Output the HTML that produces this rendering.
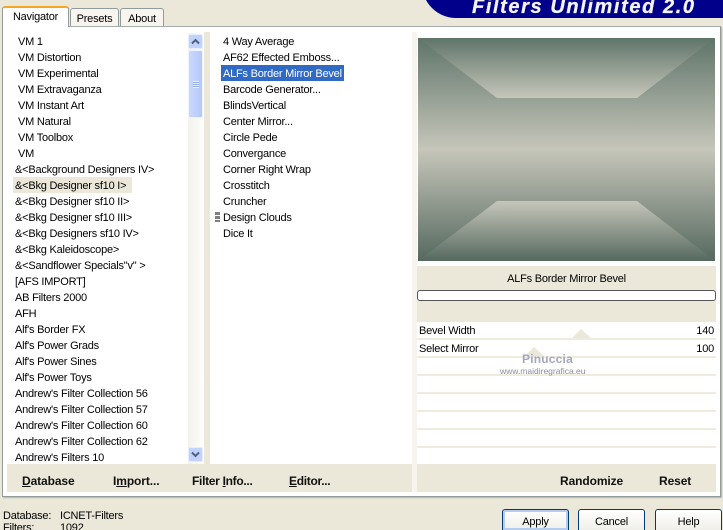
<!DOCTYPE html>
<html><head><meta charset="utf-8"><style>
html,body{margin:0;padding:0;width:723px;height:530px;overflow:hidden}
#root{left:0;top:0;width:723px;height:530px;overflow:hidden;background:#ebe8da;font-family:"Liberation Sans",sans-serif;font-size:11px;letter-spacing:-.22px;color:#000}
div{position:absolute;box-sizing:border-box}
.row{position:absolute;height:16px;line-height:18px;white-space:pre}
.tab{background:#f7f5ee;border:1px solid #919b9c;border-bottom:none;border-radius:3px 3px 0 0;text-align:center;line-height:20px}
.b{font-weight:bold;font-size:12px;letter-spacing:-.1px;position:absolute;top:473px;line-height:16px;white-space:pre;color:#111}
.line{left:417px;width:299px;height:2px;background:#efecdf}
.btn{top:509px;width:67px;height:21px;border:1px solid #003c74;border-bottom:none;border-radius:3px 3px 0 0;background:linear-gradient(#fff,#f0efe9);text-align:center;line-height:25px}
</style></head><body><div id="root">
<div style="left:422px;top:-30px;width:320px;height:48px;background:#00008b;border-radius:0 0 0 34px"></div>
<div style="left:472px;top:-4px;font:italic bold 20px/22px 'Liberation Sans',sans-serif;color:#f4f4f4;letter-spacing:1.6px;-webkit-text-stroke:.3px #f4f4f4;white-space:pre">Filters Unlimited 2.0</div>

<div style="left:2px;top:26px;width:719px;height:471px;background:#fff;border:1px solid #919b9c;border-top-color:#a5adac;box-shadow:1px 1px 1px #b5b5ad"></div>
<div class="tab" style="left:70px;top:8px;width:49px;height:18px;line-height:21px">Presets</div>
<div class="tab" style="left:120px;top:8px;width:44px;height:18px;line-height:21px">About</div>
<div class="tab" style="left:2px;top:6px;width:67px;height:21px;background:#fff;border-top:2px solid #f5a623;line-height:18px;z-index:2">Navigator</div>

<div style="left:3px;top:27px;width:4px;height:469px;background:#fff"></div>
<div style="left:204px;top:32px;width:6px;height:432px;background:#ebe8da"></div>
<div style="left:412px;top:32px;width:5px;height:460px;background:#f6f4ec"></div>

<!-- scrollbar -->
<div style="left:188px;top:33px;width:16px;height:431px;background:linear-gradient(90deg,#f3f2ec,#fefefb)"></div>
<div style="left:188px;top:34px;width:15px;height:15px;background:#c2d3fb;border:1px solid #e6edfd;border-radius:2px"></div>
<svg style="position:absolute;left:188px;top:34px" width="15" height="15"><path d="M4 9.5L7.5 6L11 9.5" fill="none" stroke="#4d6185" stroke-width="2"/></svg>
<div style="left:188px;top:50px;width:15px;height:68px;background:linear-gradient(90deg,#c9d8fc,#b5c9f8);border:1px solid #eef3fe;border-radius:2px"></div>
<div style="left:193px;top:81px;width:6px;height:7px;background:repeating-linear-gradient(#eef3fe 0 1px,#8faae8 1px 2px)"></div>
<div style="left:188px;top:447px;width:15px;height:15px;background:#c2d3fb;border:1px solid #e6edfd;border-radius:2px"></div>
<svg style="position:absolute;left:188px;top:447px" width="15" height="15"><path d="M4 5.5L7.5 9L11 5.5" fill="none" stroke="#4d6185" stroke-width="2"/></svg>

<!-- left list -->
<div style="left:13px;top:177px;width:119px;height:16px;background:#ebe8da"></div>
<div class="row" style="left:18px;top:33px">VM 1</div>
<div class="row" style="left:18px;top:49px">VM Distortion</div>
<div class="row" style="left:18px;top:65px">VM Experimental</div>
<div class="row" style="left:18px;top:81px">VM Extravaganza</div>
<div class="row" style="left:18px;top:97px">VM Instant Art</div>
<div class="row" style="left:18px;top:113px">VM Natural</div>
<div class="row" style="left:18px;top:129px">VM Toolbox</div>
<div class="row" style="left:18px;top:145px">VM</div>
<div class="row" style="left:15px;top:161px">&amp;&lt;Background Designers IV&gt;</div>
<div class="row" style="left:15px;top:177px">&amp;&lt;Bkg Designer sf10 I&gt;</div>
<div class="row" style="left:15px;top:193px">&amp;&lt;Bkg Designer sf10 II&gt;</div>
<div class="row" style="left:15px;top:209px">&amp;&lt;Bkg Designer sf10 III&gt;</div>
<div class="row" style="left:15px;top:225px">&amp;&lt;Bkg Designers sf10 IV&gt;</div>
<div class="row" style="left:15px;top:241px">&amp;&lt;Bkg Kaleidoscope&gt;</div>
<div class="row" style="left:15px;top:257px">&amp;&lt;Sandflower Specials"v" &gt;</div>
<div class="row" style="left:15px;top:273px">[AFS IMPORT]</div>
<div class="row" style="left:15px;top:289px">AB Filters 2000</div>
<div class="row" style="left:15px;top:305px">AFH</div>
<div class="row" style="left:15px;top:321px">Alf's Border FX</div>
<div class="row" style="left:15px;top:337px">Alf's Power Grads</div>
<div class="row" style="left:15px;top:353px">Alf's Power Sines</div>
<div class="row" style="left:15px;top:369px">Alf's Power Toys</div>
<div class="row" style="left:15px;top:385px">Andrew's Filter Collection 56</div>
<div class="row" style="left:15px;top:401px">Andrew's Filter Collection 57</div>
<div class="row" style="left:15px;top:417px">Andrew's Filter Collection 60</div>
<div class="row" style="left:15px;top:433px">Andrew's Filter Collection 62</div>
<div class="row" style="left:15px;top:449px">Andrew's Filters 10</div>

<!-- middle list -->
<div style="left:221px;top:65px;width:123px;height:16px;background:#316ac5"></div>
<div class="row" style="left:223px;top:33px">4 Way Average</div>
<div class="row" style="left:223px;top:49px">AF62 Effected Emboss...</div>
<div class="row" style="left:223px;top:65px;color:#fff">ALFs Border Mirror Bevel</div>
<div class="row" style="left:223px;top:81px">Barcode Generator...</div>
<div class="row" style="left:223px;top:97px">BlindsVertical</div>
<div class="row" style="left:223px;top:113px">Center Mirror...</div>
<div class="row" style="left:223px;top:129px">Circle Pede</div>
<div class="row" style="left:223px;top:145px">Convergance</div>
<div class="row" style="left:223px;top:161px">Corner Right Wrap</div>
<div class="row" style="left:223px;top:177px">Crosstitch</div>
<div class="row" style="left:223px;top:193px">Cruncher</div>
<div class="row" style="left:223px;top:209px">Design Clouds</div>
<div class="row" style="left:223px;top:225px">Dice It</div>
<div style="left:215px;top:212px;width:5px;height:10px;background:repeating-linear-gradient(#808080 0 3px,#fff 3px 4px)"></div>

<!-- preview -->
<svg style="position:absolute;left:418px;top:38px" width="297" height="223">
<defs>
<linearGradient id="g" x1="0" y1="0" x2="0" y2="1"><stop offset="0" stop-color="#5f7469"/><stop offset=".5" stop-color="#c6c6ba"/><stop offset="1" stop-color="#56695f"/></linearGradient>
<linearGradient id="t" x1="0" y1="0" x2="0" y2="1"><stop offset="0" stop-color="#5f7469"/><stop offset="1" stop-color="#c6c6ba"/></linearGradient>
<linearGradient id="u" x1="0" y1="0" x2="0" y2="1"><stop offset="0" stop-color="#c6c6ba"/><stop offset="1" stop-color="#56695f"/></linearGradient>
</defs>
<rect width="297" height="223" fill="url(#g)"/>
<polygon points="0,0 297,0 219,60 79,60" fill="url(#t)"/>
<polygon points="79,163 219,163 297,223 0,223" fill="url(#u)"/>
</svg>

<!-- right panel -->
<div style="left:417px;top:266px;width:299px;height:56px;background:#ebe8da"></div>
<div class="row" style="left:417px;top:270px;width:299px;text-align:center">ALFs Border Mirror Bevel</div>
<div style="left:417px;top:290px;width:299px;height:11px;background:#fff;border:1px solid #555;border-radius:3px"></div>
<div class="line" style="top:338px"></div>
<div class="line" style="top:356px"></div>
<div class="line" style="top:374px"></div>
<div class="line" style="top:392px"></div>
<div class="line" style="top:410px"></div>
<div class="line" style="top:428px"></div>
<div class="line" style="top:446px"></div>
<svg style="position:absolute;left:520px;top:325px" width="75" height="34"><polygon points="61,4 71,13 52,13" fill="#ebe8da"/><polygon points="14,22 24,31 5,31" fill="#ebe8da"/></svg>
<div class="row" style="left:419px;top:322px">Bevel Width</div>
<div class="row" style="left:419px;top:340px">Select Mirror</div>
<div class="row" style="left:660px;top:322px;width:54px;text-align:right">140</div>
<div class="row" style="left:660px;top:340px;width:54px;text-align:right">100</div>
<div class="row" style="left:522px;top:350px;font-weight:bold;font-size:12px;letter-spacing:.2px;color:#a3a8bd">Pinuccia</div>
<div class="row" style="left:500px;top:362px;font-size:8.5px;letter-spacing:0;color:#8a8ea0">www.maidiregrafica.eu</div>

<!-- bottom bands -->
<div style="left:7px;top:464px;width:405px;height:28px;background:#ebe8da"></div>
<div style="left:417px;top:464px;width:299px;height:28px;background:#ebe8da"></div>
<div class="b" style="left:22px"><u>D</u>atabase</div>
<div class="b" style="left:113px">I<u>m</u>port...</div>
<div class="b" style="left:192px;letter-spacing:-.3px">Filter <u>I</u>nfo...</div>
<div class="b" style="left:289px;letter-spacing:-.3px"><u>E</u>ditor...</div>
<div class="b" style="left:560px">Randomize</div>
<div class="b" style="left:659px">Reset</div>

<!-- status -->
<div class="row" style="left:3px;top:507px">Database:</div>
<div class="row" style="left:60px;top:507px">ICNET-Filters</div>
<div class="row" style="left:3px;top:519px">Filters:</div>
<div class="row" style="left:60px;top:519px">1092</div>

<!-- buttons -->
<div class="btn" style="left:502px;box-shadow:inset 0 0 0 2px #b6cbf0">Apply</div>
<div class="btn" style="left:578px">Cancel</div>
<div class="btn" style="left:655px">Help</div>
</div></body></html>
